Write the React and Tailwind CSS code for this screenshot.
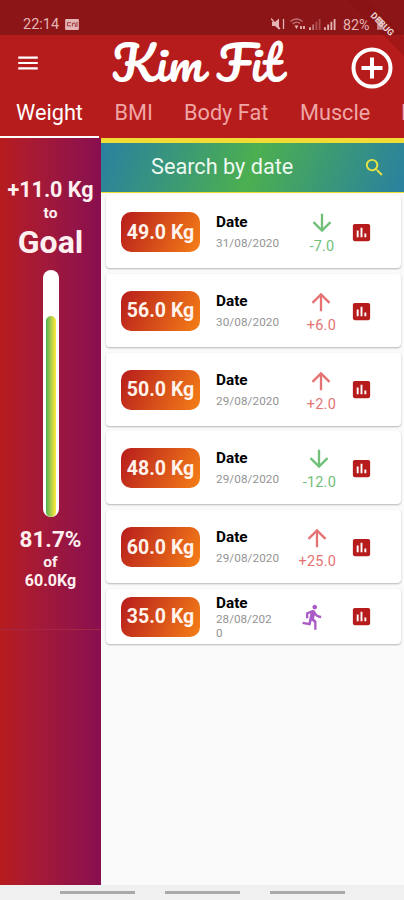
import {
  MdArrowDownward,
  MdArrowUpward,
  MdAssessment,
  MdBatteryFull,
  MdDirectionsRun,
  MdMenu,
  MdSearch
} from "react-icons/md";

const entries = [
  { id: 1, weight: "49.0 Kg", date: "31/08/2020", change: "-7.0" },
  { id: 2, weight: "56.0 Kg", date: "30/08/2020", change: "+6.0" },
  { id: 3, weight: "50.0 Kg", date: "29/08/2020", change: "+2.0" },
  { id: 4, weight: "48.0 Kg", date: "29/08/2020", change: "-12.0" },
  { id: 5, weight: "60.0 Kg", date: "29/08/2020", change: "+25.0" },
  { id: 6, weight: "35.0 Kg", date: "28/08/2020", change: null }
];

function SignalBars({ dim }) {
  return (
    <svg viewBox="0 0 13 12" className="h-[11px] w-3" fill="#e3b5b5">
      <rect x="0" y="9" width="2" height="3" />
      <rect x="3.5" y="6" width="2" height="6" opacity={dim ? 0.6 : 1} />
      <rect x="7" y="3" width="2" height="9" opacity={dim ? 0.35 : 1} />
      <rect x="10.5" y="0" width="2" height="12" opacity={dim ? 0.35 : 1} />
    </svg>
  );
}

function StatusBar() {
  return (
    <div className="flex h-[35px] items-end overflow-hidden bg-[#8c1517] pb-[2px] text-[#e3b5b5]">
      <span className="ml-[23px] w-[38px] text-[14.5px] leading-[16px]">22:14</span>
      <svg viewBox="0 0 15 12" className="mb-[3px] ml-1 h-[11px] w-[14px]">
        <rect width="15" height="12" rx="1" fill="#e3b5b5" />
        <path d="M6.5 4H2.5v3.5h4M8 8V4.5h3V8h2V3" stroke="#8c1517" strokeWidth="1" fill="none" opacity="0.8" />
      </svg>
      <div className="ml-auto flex items-end">
        <svg viewBox="0 0 14 12" className="mb-[3px] h-3 w-[14px]" fill="#e3b5b5">
          <path d="M1 4h3l4-3.5v11L4 8H1z" />
          <path d="M0 0.5l9 10.5M12.5 1v10" stroke="#e3b5b5" strokeWidth="1.3" fill="none" />
        </svg>
        <svg viewBox="0 0 16 12" className="mb-[3px] ml-[5px] h-3 w-4" fill="none" stroke="#e3b5b5" strokeWidth="1.4">
          <path d="M0.5 3.5Q6.5 -1.5 12.5 3.5M2.5 6Q6.5 2.5 10 5.5" opacity="0.6" />
          <path d="M4.5 7.5h4L6.5 11z" fill="#e3b5b5" stroke="none" />
          <path d="M11 8v3M14 8v3" strokeWidth="1.8" />
        </svg>
        <div className="mb-[3px] ml-[3px] flex gap-[3px]">
          <SignalBars dim />
          <SignalBars />
        </div>
        <span className="ml-[7px] w-[29px] text-[14.3px] leading-[16px]">82%</span>
      </div>
      <MdBatteryFull className="mr-[17px] mb-[2px] ml-[1px] size-[14px] shrink-0 text-[#f3dada]" />
    </div>
  );
}

function Header() {
  return (
    <header className="bg-[#b71c1c]">
      <div className="flex h-[58px] items-start">
        <MdMenu className="mt-[15px] ml-[15px] size-[26px] shrink-0 text-white" />
        <h1 className="ml-[70.5px] w-[190.5px] shrink-0 whitespace-nowrap font-['Pacifico',cursive] text-[47px] leading-[55px] font-normal tracking-[0.5px] text-white">
          Kim Fit
        </h1>
        <svg viewBox="0 0 42 42" className="mt-3 ml-[49px] size-[42px] shrink-0" fill="none" stroke="white">
          <circle cx="21" cy="21" r="18.5" strokeWidth="4" />
          <path d="M21 10.5v21M10.5 21h21" strokeWidth="4" />
        </svg>
      </div>
      <nav className="flex h-[45px] overflow-hidden text-[21.7px] leading-[40px] whitespace-nowrap text-[#efa6a6]">
        <span className="h-[45px] w-[99px] shrink-0 border-b-2 border-white text-center text-white">Weight</span>
        <span className="ml-[15.5px] w-[69.5px] shrink-0">BMI</span>
        <span className="w-[116px] shrink-0">Body Fat</span>
        <span className="w-[101px] shrink-0">Muscle</span>
        <span>Hydration</span>
      </nav>
    </header>
  );
}

function GoalPanel() {
  return (
    <aside className="flex w-[101px] shrink-0 flex-col items-center bg-linear-to-r from-[#b71c1c] to-[#880e4f] font-bold text-[#fff0f0]">
      <p className="mt-[38px] text-[21.5px] leading-[28px] whitespace-nowrap">+11.0 Kg</p>
      <p className="text-[15.5px] leading-[18px]">to</p>
      <p className="text-[32px] leading-[40px]">Goal</p>
      <div className="mt-[8px] flex h-[247px] w-4 shrink-0 flex-col justify-end rounded-full bg-white px-[3px]">
        <div className="h-[201px] rounded-full bg-linear-to-r from-[#4caf50] to-[#ffeb3b]" />
      </div>
      <p className="mt-[8px] text-[22.5px] leading-[28px]">81.7%</p>
      <p className="text-[15.5px] leading-[18px]">of</p>
      <p className="text-[16px] leading-[20px]">60.0Kg</p>
      <div className="mt-[38px] h-px w-full bg-[#a62543]" />
    </aside>
  );
}

function Change({ value }) {
  if (!value) {
    return <MdDirectionsRun className="size-[28px] text-[#ab5bc5]" />;
  }

  const lost = value.startsWith("-");
  const Arrow = lost ? MdArrowDownward : MdArrowUpward;

  return (
    <div className={`flex flex-col items-center pt-[1px] ${lost ? "text-[#71c079]" : "text-[#e57373]"}`}>
      <Arrow className="size-[28px]" />
      <span className="mt-[1px] text-[14.5px] leading-[18px] tracking-[0.2px]">{value}</span>
    </div>
  );
}

function EntryCard({ entry }) {
  return (
    <article
      className={`flex shrink-0 items-center rounded-[4px] bg-white pl-[15px] shadow-[0_1px_2px_rgba(0,0,0,0.28)] ${
        entry.change ? "h-[73px] pt-[1px]" : "h-[55px] pt-[1px]"
      }`}
    >
      <div className="flex h-10 w-[79px] shrink-0 items-center justify-center rounded-[10px] bg-linear-[115deg] from-[#b71c1c] to-[#f57f17] text-[19.5px] font-bold whitespace-nowrap text-[#fff3ec]">
        {entry.weight}
      </div>
      <div className="ml-4 w-[66px] shrink-0">
        <p className="text-[15.3px] leading-[18px] font-bold text-black">Date</p>
        <p
          className={`text-[11.7px] text-[#949494] ${
            entry.change ? "mt-[4px] leading-[16px] tracking-[0.1px]" : "w-[60px] leading-[14px] break-all"
          }`}
        >
          {entry.date}
        </p>
      </div>
      <div className="ml-auto flex">
        <Change value={entry.change} />
      </div>
      <MdAssessment className={`mr-[28px] size-[23px] shrink-0 text-[#b71c1c] ${entry.change ? "ml-[14px]" : "ml-[23px]"}`} />
    </article>
  );
}

function SearchBar() {
  return (
    <button
      type="button"
      className="flex h-[55px] w-full shrink-0 items-center border-t-[5px] border-b border-[#f1dc35] bg-linear-[110deg] from-[#2980a0] via-[#4caf50] to-[#2980a0]"
    >
      <span className="ml-[50px] text-[21.7px] text-[#edf8f0]">Search by date</span>
      <MdSearch className="mr-[18px] ml-auto size-[23px] text-[#e9e243]" />
    </button>
  );
}

export default function App() {
  return (
    <div className="flex h-[900px] w-[404px] flex-col overflow-hidden bg-[#fafafa] font-['Roboto',sans-serif]">
      <div className="relative">
        <StatusBar />
        <Header />
        <div className="pointer-events-none absolute top-0 right-0 size-[60px] overflow-hidden">
          <div className="absolute top-[18px] right-[-23px] w-[90px] rotate-45 bg-[#851214]/40 text-center text-[9px] leading-[13px] font-bold text-[#eed6d6]">
            DEBUG
          </div>
        </div>
      </div>
      <main className="flex h-[747px] shrink-0">
        <GoalPanel />
        <section className="flex min-w-0 flex-1 flex-col">
          <SearchBar />
          <div className="flex flex-col gap-[5.7px] pt-[2.4px] pr-[3px] pl-[5px]">
            {entries.map((entry) => (
              <EntryCard key={entry.id} entry={entry} />
            ))}
          </div>
        </section>
      </main>
      <footer className="flex flex-1 items-start bg-[#f0f0f0] pt-[6px] pl-[60px]">
        <div className="h-[3px] w-[75px] bg-[#a9a9a9]" />
        <div className="ml-[30px] h-[3px] w-[75px] bg-[#a9a9a9]" />
        <div className="ml-[30px] h-[3px] w-[75px] bg-[#a9a9a9]" />
      </footer>
    </div>
  );
}
